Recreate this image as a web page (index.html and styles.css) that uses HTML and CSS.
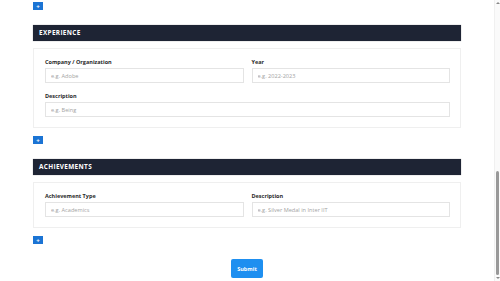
FILE: index.html
```html
<!DOCTYPE html>
<html>
    <head>
        <meta charset="UTF-8">
        <title>Resume</title>
        <link rel="stylesheet" href="styles.css">
    </head>
    <body>
        <div class="window">

            <form class="resume">

                <div class="section">
                    <button type="button" class="add">+</button>
                </div>

                <div class="section">
                    <div class="section_title">EXPERIENCE</div>
                    <div class="card">
                        <div class="row">
                            <div class="field">
                                <label>Company / Organization</label>
                                <input type="text" placeholder="e.g. Adobe">
                            </div>
                            <div class="field">
                                <label>Year</label>
                                <input type="text" placeholder="e.g. 2022-2023">
                            </div>
                        </div>
                        <div class="field">
                            <label>Description</label>
                            <input type="text" placeholder="e.g. Being">
                        </div>
                    </div>
                    <button type="button" class="add">+</button>
                </div>

                <div class="section">
                    <div class="section_title">ACHIEVEMENTS</div>
                    <div class="card">
                        <div class="row">
                            <div class="field">
                                <label>Achievement Type</label>
                                <input type="text" placeholder="e.g. Academics">
                            </div>
                            <div class="field">
                                <label>Description</label>
                                <input type="text" placeholder="e.g. Silver Medal in Inter IIT">
                            </div>
                        </div>
                    </div>
                    <button type="button" class="add">+</button>
                </div>

                <div class="actions">
                    <button type="submit" class="submit">Submit</button>
                </div>

            </form>

            <div class="scrollbar">
                <span class="arrow up"></span>
                <span class="track"></span>
                <span class="thumb"></span>
                <span class="arrow down"></span>
            </div>

        </div>
    </body>
</html>
```

FILE: styles.css
```css
body{
    margin: 0;
    background: #fff;
    font-family: "Open Sans", "Liberation Sans", sans-serif;
    color: #222;
}
.window{
    display: flex;
    height: 100vh;
    overflow: hidden;
}
.resume{
    width: 428px;
    margin: 0 auto;
    padding: 2px 0 2px;
}
.section{
    margin-bottom: 15px;
}
.section_title{
    height: 16px;
    line-height: 16px;
    padding-left: 6px;
    background: #1e2434;
    color: #fff;
    font-size: 6.4px;
    font-weight: 700;
    letter-spacing: 0.35px;
    box-shadow: 0 0 1px rgba(0,0,0,0.4);
}
.card{
    margin-top: 7px;
    border: 1px solid #efefef;
    padding: 10px 10px 10px 11px;
}
.row{
    display: flex;
    gap: 8px;
}
.row .field{
    flex: 1;
}
.field{
    margin-bottom: 10px;
}
.card > .field:last-child,
.card > .row:last-child .field{
    margin-bottom: 0;
}
.field label{
    display: block;
    font-size: 5.5px;
    font-weight: 700;
    line-height: 7px;
    margin-bottom: 2px;
    color: #2a2a2a;
}
.field input{
    display: block;
    width: 100%;
    box-sizing: border-box;
    height: 15px;
    margin: 0;
    border: 1px solid #e4e4e4;
    padding: 0 5px;
    font-family: inherit;
    font-size: 5.6px;
    color: #333;
    outline: none;
}
.field input::placeholder{
    color: #a3a3a3;
}
.add{
    display: block;
    margin-top: 8px;
    width: 10px;
    height: 8px;
    padding: 0;
    border: none;
    background: #1b74d4;
    color: #fff;
    font-size: 6px;
    line-height: 8px;
    font-weight: 700;
    cursor: pointer;
}
.section > .add:first-child{
    margin-top: 0;
}
.actions{
    text-align: center;
}
.submit{
    display: block;
    margin: 0 auto;
    width: 32px;
    height: 19px;
    padding: 0;
    border: none;
    border-radius: 2px;
    background: #1e8ff0;
    color: #fff;
    font-family: inherit;
    font-size: 5.5px;
    font-weight: 700;
    cursor: pointer;
}
/* 假滚动条 */
.scrollbar{
    width: 6px;
    flex: none;
    display: flex;
    flex-direction: column;
    align-items: center;
    background: #fafafa;
    border-left: 1px solid #f0f0f0;
    box-sizing: border-box;
}
.scrollbar .track{
    flex: 1;
}
.scrollbar .thumb{
    width: 3px;
    height: 104px;
    border-radius: 2px;
    background: #999;
}
.arrow{
    width: 0;
    height: 0;
    margin: 2px 0;
    border-left: 2px solid transparent;
    border-right: 2px solid transparent;
}
.arrow.up{
    border-bottom: 2px solid #888;
}
.arrow.down{
    border-top: 2px solid #888;
}
```
